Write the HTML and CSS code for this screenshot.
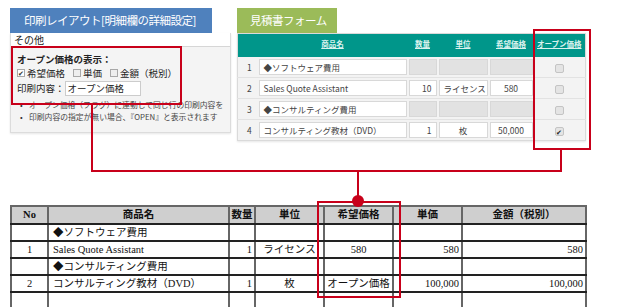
FILE: index.html
```html
<!DOCTYPE html>
<html lang="ja">

<head>
    <meta charset="UTF-8">
    <meta name="viewport" content="width=device-width, initial-scale=1.0">
    <title>オープン価格</title>
    <link rel="stylesheet" href="styles.css">
</head>

<body>

    <div class="page">
        <div class="top">
            <section class="setting">
                <div class="tab tab-blue">印刷レイアウト[明細欄の詳細設定]</div>
                <div class="panel">
                    <div class="panel-title">その他</div>
                    <div class="panel-body">
                        <p class="label">オープン価格の表示：</p>
                        <div class="checks">
                            <span class="check"><span class="box on">✔</span>希望価格</span>
                            <span class="check"><span class="box"></span>単価</span>
                            <span class="check"><span class="box"></span>金額（税別）</span>
                        </div>
                        <div class="print-row">印刷内容：<span class="field">オープン価格</span></div>
                        <ul class="notes">
                            <li>オープン価格（フラグ）に連動して同じ行の印刷内容を</li>
                            <li>印刷内容の指定が無い場合、『OPEN』と表示されます</li>
                        </ul>
                    </div>
                </div>
            </section>

            <section class="form">
                <div class="tab tab-green">見積書フォーム</div>
                <table class="grid">
                    <thead>
                        <tr>
                            <th class="c-no"></th>
                            <th class="c-name"><u>商品名</u></th>
                            <th class="c-qty"><u>数量</u></th>
                            <th class="c-unit"><u>単位</u></th>
                            <th class="c-price"><u>希望価格</u></th>
                            <th class="c-open"><u>オープン価格</u></th>
                        </tr>
                    </thead>
                    <tbody>
                        <tr>
                            <td class="c-no">1</td>
                            <td><span class="in">◆ソフトウェア費用</span></td>
                            <td><span class="in off"></span></td>
                            <td><span class="in off"></span></td>
                            <td><span class="in off"></span></td>
                            <td><span class="cb"></span></td>
                        </tr>
                        <tr>
                            <td class="c-no">2</td>
                            <td><span class="in">Sales Quote Assistant</span></td>
                            <td><span class="in num">10</span></td>
                            <td><span class="in mid">ライセンス</span></td>
                            <td><span class="in mid">580</span></td>
                            <td><span class="cb"></span></td>
                        </tr>
                        <tr>
                            <td class="c-no">3</td>
                            <td><span class="in">◆コンサルティング費用</span></td>
                            <td><span class="in off"></span></td>
                            <td><span class="in off"></span></td>
                            <td><span class="in off"></span></td>
                            <td><span class="cb"></span></td>
                        </tr>
                        <tr>
                            <td class="c-no">4</td>
                            <td><span class="in">コンサルティング教材（DVD）</span></td>
                            <td><span class="in num">1</span></td>
                            <td><span class="in mid">枚</span></td>
                            <td><span class="in mid">50,000</span></td>
                            <td><span class="cb on">✔</span></td>
                        </tr>
                    </tbody>
                </table>
            </section>
        </div>

        <table class="sheet">
            <thead>
                <tr>
                    <th class="s-no">No</th>
                    <th class="s-name">商品名</th>
                    <th class="s-qty">数量</th>
                    <th class="s-unit">単位</th>
                    <th class="s-price">希望価格</th>
                    <th class="s-unitprice">単価</th>
                    <th class="s-amount">金額（税別）</th>
                </tr>
            </thead>
            <tbody>
                <tr>
                    <td></td>
                    <td class="left">◆ソフトウェア費用</td>
                    <td></td><td></td><td></td><td></td><td></td>
                </tr>
                <tr>
                    <td>1</td>
                    <td class="left">Sales Quote Assistant</td>
                    <td class="right">1</td>
                    <td>ライセンス</td>
                    <td>580</td>
                    <td class="right">580</td>
                    <td class="right">580</td>
                </tr>
                <tr>
                    <td></td>
                    <td class="left">◆コンサルティング費用</td>
                    <td></td><td></td><td></td><td></td><td></td>
                </tr>
                <tr>
                    <td>2</td>
                    <td class="left">コンサルティング教材（DVD）</td>
                    <td class="right">1</td>
                    <td>枚</td>
                    <td>オープン価格</td>
                    <td class="right">100,000</td>
                    <td class="right">100,000</td>
                </tr>
                <tr class="cut">
                    <td></td><td></td><td></td><td></td><td></td><td></td><td></td>
                </tr>
            </tbody>
        </table>

        <!-- callout boxes and connector lines -->
        <svg class="callouts" width="640" height="307" viewBox="0 0 640 307">
            <g fill="none" stroke="#c8001a" stroke-width="2">
                <rect x="12" y="47" width="169" height="57" />
                <rect x="534" y="30" width="56" height="119" />
                <rect x="318" y="202" width="82" height="95" />
                <polyline points="92,104 92,171 561,171 561,149" />
                <line x1="358" y1="171" x2="358" y2="201" />
            </g>
            <circle cx="358" cy="201" r="6" fill="#c8001a" />
        </svg>
    </div>

</body>

</html>
```

FILE: styles.css
```css
* {
    margin: 0;
    padding: 0;
    box-sizing: border-box;
}

html,
body {
    width: 100%;
    height: 100%;
    background: #fff;
    font-family: "Noto Sans CJK JP", "Noto Sans", sans-serif;
    overflow: hidden;
}

.page {
    position: relative;
    width: 640px;
    height: 307px;
    padding: 8px 0 0 10px;
}

.top {
    display: flex;
    align-items: flex-start;
    gap: 6px;
    height: 197px;
}

.tab {
    height: 25px;
    color: #fff;
    font-size: 11.5px;
    line-height: 25px;
    letter-spacing: -0.5px;
    white-space: nowrap;
    overflow: hidden;
}

.tab-blue {
    width: 202px;
    padding-left: 14px;
    background-color: #4f81bd;
}

.tab-green {
    width: 100px;
    padding-left: 13px;
    background-color: #9bbb59;
}

/* left: setting panel */
.setting {
    width: 221px;
}

.panel {
    height: 100px;
    border: 1px solid #dcdcdc;
    border-top: 0;
    background-color: #f4f4f4;
    overflow: hidden;
    box-shadow: 0 1px 2px rgba(0, 0, 0, 0.1);
}

.panel-title {
    height: 14px;
    padding-left: 3px;
    background-color: #fff;
    border-bottom: 1px solid #d6d6d6;
    font-size: 10px;
    line-height: 13px;
    color: #222;
}

.panel-body {
    padding: 5px 0 0 6px;
    font-size: 9.5px;
    color: #222;
    white-space: nowrap;
}

.label {
    font-weight: 700;
    line-height: 14px;
}

.checks {
    display: flex;
    gap: 8px;
    line-height: 14px;
}

.check {
    display: flex;
    align-items: center;
    gap: 2px;
}

.box {
    display: inline-block;
    width: 8px;
    height: 8px;
    border: 1px solid #a8a8a8;
    background-color: #eee;
    font-size: 7px;
    line-height: 7px;
    text-align: center;
    color: #333;
}

.box.on {
    background-color: #fff;
}

.print-row {
    display: flex;
    align-items: center;
    margin-top: 1px;
    height: 14px;
}

.field {
    display: inline-block;
    width: 76px;
    height: 15px;
    padding-left: 2px;
    border: 1px solid #ccc;
    background-color: #fff;
    line-height: 13px;
}

.notes {
    margin-top: 4px;
    padding-left: 3px;
    list-style: none;
    font-size: 7.8px;
    color: #444;
}

.notes li {
    line-height: 12px;
}

.notes li::before {
    content: "•";
    display: inline-block;
    width: 9px;
    color: #333;
}

/* right: form */
.form {
    width: 348px;
}

.grid {
    width: 348px;
    border-collapse: collapse;
    border: 1px solid #dadada;
    background-color: #f3f3f3;
    font-size: 8.5px;
    color: #444;
    table-layout: fixed;
    box-shadow: 0 1px 2px rgba(0, 0, 0, 0.1);
}

.grid th {
    height: 23px;
    background-color: #00968a;
    color: #d9f2ee;
    font-size: 7.5px;
    font-weight: 700;
    vertical-align: top;
    padding-top: 4px;
}

.grid td {
    height: 21px;
    padding: 0 1px;
    border-bottom: 1px solid #e2e2e2;
    text-align: center;
    vertical-align: middle;
}

.grid tr:last-child td {
    border-bottom: 0;
}

.c-no { width: 20px; }
.c-name { width: 150px; }
.c-qty { width: 30px; }
.c-unit { width: 51px; }
.c-price { width: 45px; }
.c-open { width: 52px; }

.grid td.c-no {
    padding-left: 4px;
}

.in {
    display: block;
    height: 16px;
    padding: 0 4px;
    border: 1px solid #d8d8d8;
    background-color: #fff;
    text-align: left;
    line-height: 14px;
    white-space: nowrap;
    overflow: hidden;
}

.in.off {
    background-color: #e2e2e2;
}

.in.num {
    text-align: right;
}

.in.mid {
    text-align: center;
}

.cb {
    display: inline-block;
    width: 9px;
    height: 9px;
    border: 1px solid #c4c4c4;
    border-radius: 2px;
    background-color: #e4e4e4;
    font-size: 7px;
    line-height: 8px;
    color: #222;
    vertical-align: middle;
}

/* bottom: printed sheet */
.sheet {
    width: 575px;
    border-collapse: collapse;
    table-layout: fixed;
    font-family: "Liberation Serif", "Noto Sans CJK JP", serif;
    font-size: 10.5px;
    color: #111;
}

.sheet th {
    height: 18px;
    background-color: #cfcfcf;
    border: 2px solid #666;
    border-bottom: 2px solid #222;
    font-weight: 700;
    line-height: 14px;
}

.sheet td {
    height: 17px;
    padding: 0 2px;
    border-left: 2px solid #666;
    border-right: 2px solid #666;
    border-bottom: 2px solid #222;
    text-align: center;
    line-height: 14px;
    white-space: nowrap;
}

.sheet td.left {
    text-align: left;
    padding-left: 4px;
}

.sheet td.right {
    text-align: right;
}

.sheet .cut td {
    border-bottom: 0;
}

.s-no { width: 37px; }
.s-name { width: 181px; }
.s-qty { width: 26px; }
.s-unit { width: 69px; }
.s-price { width: 69px; }
.s-unitprice { width: 69px; }
.s-amount { width: 124px; }

.callouts {
    position: absolute;
    top: 0;
    left: 0;
    pointer-events: none;
}
```
